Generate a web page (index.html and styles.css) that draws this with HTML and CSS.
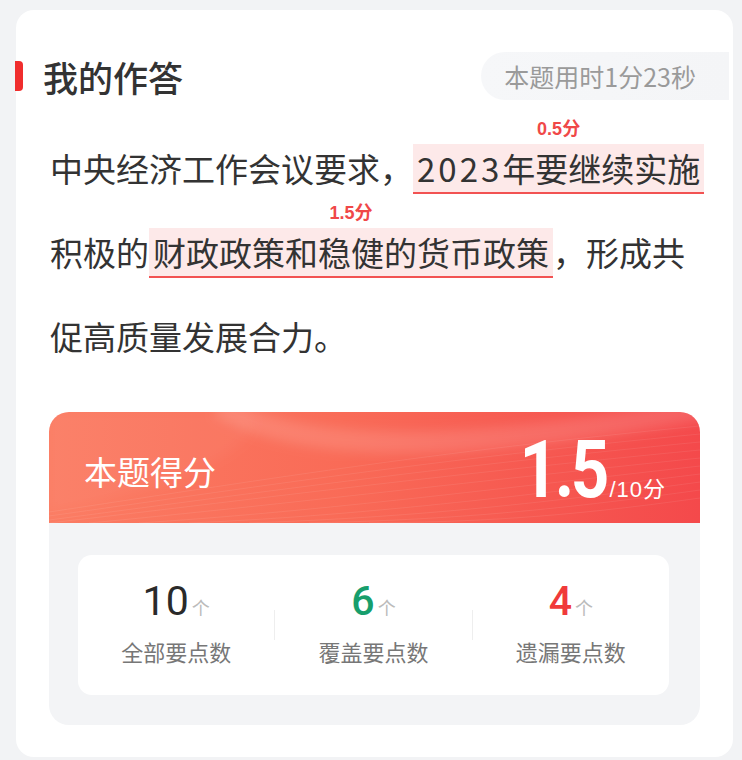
FILE: index.html
```html
<!DOCTYPE html>
<html lang="zh-CN">
<head>
<meta charset="utf-8">
<title>我的作答</title>
<link rel="stylesheet" href="styles.css">
</head>
<body>
<div class="card">
  <div class="head">
    <span class="bar"></span>
    <h2 class="title">我的作答</h2>
    <span class="timer">本题用时1分23秒</span>
  </div>
  <p class="answer">中央经济工作会议要求，<span class="hit"><span class="pts">0.5分</span><span class="num">2023</span>年要继续实施</span>积极的<span class="hit"><span class="pts">1.5分</span>财政政策和稳健的货币政策</span>，形成共促高质量发展合力。</p>
  <div class="score">
    <div class="score-head">
      <svg class="waves" viewBox="0 0 651 111" preserveAspectRatio="none" aria-hidden="true">
        <defs>
          <filter id="soft" x="-10%" y="-50%" width="120%" height="200%">
            <feGaussianBlur stdDeviation="6"/>
          </filter>
        </defs>
        <path d="M170 -6 C 250 40, 400 44, 660 -4" fill="none" stroke="#fff" stroke-opacity="0.13" stroke-width="22" filter="url(#soft)"/>
        <path d="M0 0 L 200 0 C 230 30, 120 80, 0 100 Z" fill="#fff" fill-opacity="0.04" filter="url(#soft)"/>
        <g fill="none" stroke="#fff" stroke-opacity="0.08" stroke-width="1">
          <path d="M0 100 C 200 70, 380 40, 651 14"/>
          <path d="M0 104 C 200 76, 380 48, 651 22"/>
          <path d="M0 108 C 200 82, 380 56, 651 30"/>
          <path d="M0 111 C 200 88, 380 64, 651 38"/>
          <path d="M40 111 C 220 94, 400 72, 651 46"/>
          <path d="M90 111 C 260 100, 420 80, 651 54"/>
          <path d="M140 111 C 300 104, 440 88, 651 62"/>
          <path d="M200 111 C 340 106, 460 96, 651 70"/>
          <path d="M260 111 C 380 108, 480 102, 651 78"/>
          <path d="M320 111 C 420 110, 510 106, 651 86"/>
        </g>
      </svg>
      <span class="score-label">本题得分</span>
      <span class="score-val"><b>1.5</b><small>/10分</small></span>
    </div>
    <div class="stats-wrap">
      <div class="stats">
        <div class="stat">
          <div class="stat-num"><b>10</b><i>个</i></div>
          <div class="stat-label">全部要点数</div>
        </div>
        <span class="sep"></span>
        <div class="stat">
          <div class="stat-num"><b class="green">6</b><i>个</i></div>
          <div class="stat-label">覆盖要点数</div>
        </div>
        <span class="sep"></span>
        <div class="stat">
          <div class="stat-num"><b class="red">4</b><i>个</i></div>
          <div class="stat-label">遗漏要点数</div>
        </div>
      </div>
    </div>
  </div>
</div>
</body>
</html>
```

FILE: styles.css
```css
* { box-sizing: border-box; }

body {
  margin: 0;
  background: #f2f3f5;
  font-family: "Noto Sans CJK SC", sans-serif;
}

.card {
  margin: 10px 9px 0 16px;
  height: 747px;
  background: #fff;
  border-radius: 18px;
  padding-top: 42px;
}

.head {
  display: flex;
  align-items: center;
  height: 48px;
}

.bar {
  width: 8px;
  height: 30px;
  margin-left: -1px;
  background: #f02d2d;
  border-radius: 0 4px 4px 0;
}

.title {
  flex: 1;
  margin: 0 0 0 20px;
  font-size: 35px;
  font-weight: 500;
  line-height: 1;
  color: #333;
}

.timer {
  height: 48px;
  display: flex;
  align-items: center;
  padding: 0 33px 0 23px;
  margin-right: 4px;
  background: linear-gradient(90deg, #f6f7f9, #f4f5f7);
  border-radius: 24px 0 0 24px;
  font-size: 25px;
  color: #9a9a9a;
}

.answer {
  margin: 26px 0 0;
  padding: 0 26px 0 34px;
  font-size: 33px;
  line-height: 84px;
  color: #333;
}

.hit {
  position: relative;
  padding: 0 4px;
  background: #fde9e9;
  border-bottom: 2px solid #f25252;
}

.num { letter-spacing: 3px; }

.pts {
  position: absolute;
  left: 50%;
  bottom: 100%;
  transform: translate(-50%, -6px);
  font-family: "Liberation Sans", "Noto Sans CJK SC", sans-serif;
  font-size: 18px;
  font-weight: 700;
  line-height: 18px;
  color: #f04848;
  white-space: nowrap;
}

.score {
  margin: 34px 33px 0;
}

.score-head {
  position: relative;
  overflow: hidden;
  height: 111px;
  display: flex;
  align-items: center;
  justify-content: space-between;
  padding: 0 34px 0 35px;
  border-radius: 20px 20px 0 0;
  background: linear-gradient(90deg, #fb7c63 0%, #f96b57 45%, #f4494b 100%);
  color: #fff;
}

.waves {
  position: absolute;
  left: 0;
  top: 0;
  width: 100%;
  height: 100%;
}

.score-label {
  position: relative;
  padding-top: 6px;
  font-size: 33px;
}

.score-val {
  position: relative;
  display: flex;
  align-items: baseline;
  margin-top: 4px;
}

.score-val b {
  font: 700 80px/1 Roboto, sans-serif;
  letter-spacing: -4px;
  transform: scaleX(0.84);
  transform-origin: right center;
}

.score-val small {
  margin-left: 3px;
  font-size: 22px;
  letter-spacing: 1px;
  font-family: "Liberation Sans", "Noto Sans CJK SC", sans-serif;
}

.stats-wrap {
  padding: 32px 31px 30px 29px;
  background: #f3f4f6;
  border-radius: 0 0 20px 20px;
}

.stats {
  height: 140px;
  display: flex;
  background: #fff;
  border-radius: 14px;
}

.stat {
  flex: 1;
  display: flex;
  flex-direction: column;
  align-items: center;
  padding-top: 22px;
}

.stat-num {
  display: flex;
  align-items: baseline;
  height: 48px;
  line-height: 48px;
}

.stat-num b {
  font: 400 41px/48px Roboto, sans-serif;
  color: #2a2a2a;
}

.stat-num b.green { color: #179e6c; font-weight: 500; }
.stat-num b.red { color: #f03a3a; font-weight: 500; }

.stat-num i {
  margin-left: 3px;
  font-style: normal;
  font-size: 18px;
  color: #bbb;
}

.stat-label {
  margin-top: 11px;
  font-size: 22px;
  line-height: 30px;
  color: #777;
}

.sep {
  width: 1px;
  height: 30px;
  align-self: center;
  background: #eee;
}
```
